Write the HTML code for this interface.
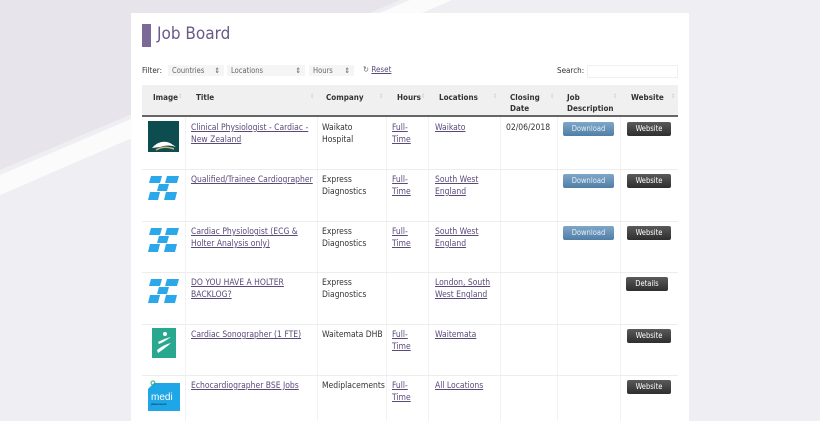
<!DOCTYPE html>
<html><head><meta charset="utf-8"><style>
*{margin:0;padding:0;box-sizing:border-box}
html,body{width:820px;height:421px;overflow:hidden}
body{position:relative;background:#efeef2;font-family:"Liberation Sans Narrow","DejaVu Sans Condensed","Liberation Sans",sans-serif;font-stretch:condensed;font-size:8.5px;color:#333}
.a{position:absolute}
.card{left:131px;top:13px;width:558px;height:408px;background:#fff}
a,.l{color:#5a4a7a;text-decoration:underline}
.t{position:absolute;line-height:12px;font-size:8.5px}
.h{position:absolute;font-weight:bold;font-size:8px;line-height:11px;color:#333}
.btn{position:absolute;height:14px;border-radius:2px;color:#fff;font-size:7.5px;text-align:center;line-height:14px}
.dl{background:linear-gradient(#7fa6c8,#4f7ea6);width:51px;left:563px;color:#e8f0f8}
.ws{background:linear-gradient(#5a5a5a,#2e2e2e);width:44px;left:627px}
.vl{position:absolute;top:117px;height:304px;width:1px;background:#f2f2f2}
.hl{position:absolute;left:142px;width:536px;height:1px;background:#ededed}
.sel{position:absolute;top:65px;height:11px;background:#f5f5f5;font-size:7.5px;color:#666;line-height:11px;padding-left:4px}
.arr{position:absolute;top:93px;font-size:6px;color:#ccc}
</style></head><body>
<svg class="a" style="left:0;top:0" width="820" height="421">
<polygon points="0,0 400,0 0,170" fill="#e7e5eb"/>
<polygon points="0,175 410,0 452,0 0,195" fill="#fbfbfc"/>
</svg>
<div class="a card"></div>
<div class="a" style="left:142px;top:24px;width:9px;height:23px;background:#7b6a98"></div>
<div class="a" style="left:157px;top:22px;font-family:'DejaVu Sans Condensed','Liberation Sans',sans-serif;font-size:17px;color:#6a5a88;line-height:24px">Job Board</div>
<div class="t" style="left:142px;top:65px;font-size:8px">Filter:</div>
<div class="sel" style="left:168px;width:56px">Countries<span style="position:absolute;right:4px">⇕</span></div>
<div class="sel" style="left:227px;width:78px">Locations<span style="position:absolute;right:4px">⇕</span></div>
<div class="sel" style="left:309px;width:45px">Hours<span style="position:absolute;right:4px">⇕</span></div>
<div class="t" style="left:363px;top:64px;font-size:8px"><span style="color:#666">↻</span> <span class="l">Reset</span></div>
<div class="t" style="left:557px;top:65px;font-size:8px">Search:</div>
<div class="a" style="left:587px;top:65px;width:91px;height:13px;border:1px solid #f0f0f0"></div>
<div class="a" style="left:142px;top:85px;width:536px;height:32px;background:#f0f0f0;border-bottom:2px solid #666"></div>
<div class="h" style="left:153px;top:92px">Image</div>
<div class="h" style="left:196px;top:92px">Title</div>
<div class="h" style="left:326px;top:92px">Company</div>
<div class="h" style="left:397px;top:92px">Hours</div>
<div class="h" style="left:439px;top:92px">Locations</div>
<div class="h" style="left:510px;top:92px">Closing<br>Date</div>
<div class="h" style="left:567px;top:92px">Job<br>Description</div>
<div class="h" style="left:631px;top:92px">Website</div>
<div class="arr" style="left:178px">⇕</div><div class="arr" style="left:310px">⇕</div><div class="arr" style="left:379px">⇕</div><div class="arr" style="left:421px">⇕</div><div class="arr" style="left:493px">⇕</div><div class="arr" style="left:550px">⇕</div><div class="arr" style="left:613px">⇕</div><div class="arr" style="left:671px">⇕</div>
<div class="vl" style="left:185px"></div><div class="vl" style="left:317px"></div><div class="vl" style="left:386px"></div><div class="vl" style="left:428px"></div><div class="vl" style="left:500px"></div><div class="vl" style="left:557px"></div><div class="vl" style="left:620px"></div>
<div class="hl" style="top:169px"></div><div class="hl" style="top:221px"></div><div class="hl" style="top:272px"></div><div class="hl" style="top:324px"></div><div class="hl" style="top:375px"></div>

<svg class="a" style="left:148px;top:121px" width="31" height="31"><rect width="31" height="31" fill="#0e4d4f"/><path d="M4 27 Q12 18 22 22 L28 26 Q20 23 12 26 Z" fill="#fff"/><path d="M8 29 Q16 24 26 28" stroke="#d6b07a" stroke-width="1.5" fill="none"/></svg>
<svg class="a" style="left:148px;top:176px" width="32" height="24"><g fill="#2aa8ea"><path d="M3 0h11l-2 7H1z"/><path d="M19 0h12l-2 7H17z"/><path d="M11 8h10l-2 7H9z"/><path d="M2 16h10l-2 8H0z"/><path d="M18 16h11l-2 8H16z"/></g></svg>
<svg class="a" style="left:148px;top:228px" width="32" height="24"><g fill="#2aa8ea"><path d="M3 0h11l-2 7H1z"/><path d="M19 0h12l-2 7H17z"/><path d="M11 8h10l-2 7H9z"/><path d="M2 16h10l-2 8H0z"/><path d="M18 16h11l-2 8H16z"/></g></svg>
<svg class="a" style="left:148px;top:279px" width="32" height="24"><g fill="#2aa8ea"><path d="M3 0h11l-2 7H1z"/><path d="M19 0h12l-2 7H17z"/><path d="M11 8h10l-2 7H9z"/><path d="M2 16h10l-2 8H0z"/><path d="M18 16h11l-2 8H16z"/></g></svg>
<svg class="a" style="left:152px;top:328px" width="24" height="30"><rect width="24" height="30" fill="#2aa88f"/><circle cx="13" cy="6" r="2" fill="#fff"/><path d="M6 14 Q14 10 19 9 Q12 14 7 16Z M5 22 Q13 16 19 15 Q12 21 6 25Z" fill="#fff"/></svg>
<svg class="a" style="left:148px;top:379px" width="32" height="32"><path d="M6 4 L32 4 L32 32 L0 32 L0 10Z" fill="#1ea6e6"/><circle cx="5" cy="4" r="2" fill="none" stroke="#2a7" stroke-width="1"/><text x="3" y="21" font-family="Liberation Sans" font-size="10" fill="#fff">medi</text><text x="3" y="26" font-family="Liberation Sans" font-size="3" fill="#113">placements</text></svg>

<div class="t l" style="left:191px;top:122px">Clinical Physiologist - Cardiac -<br>New Zealand</div>
<div class="t" style="left:322px;top:122px">Waikato<br>Hospital</div>
<div class="t l" style="left:392px;top:122px">Full-<br>Time</div>
<div class="t l" style="left:435px;top:122px">Waikato</div>
<div class="t" style="left:506px;top:122px">02/06/2018</div>
<div class="btn dl" style="top:122px">Download</div><div class="btn ws" style="top:122px">Website</div>
<div class="t l" style="left:191px;top:174px">Qualified/Trainee Cardiographer</div>
<div class="t" style="left:322px;top:174px">Express<br>Diagnostics</div>
<div class="t l" style="left:392px;top:174px">Full-<br>Time</div>
<div class="t l" style="left:435px;top:174px">South West<br>England</div>
<div class="btn dl" style="top:174px">Download</div><div class="btn ws" style="top:174px">Website</div>
<div class="t l" style="left:191px;top:226px">Cardiac Physiologist (ECG &amp;<br>Holter Analysis only)</div>
<div class="t" style="left:322px;top:226px">Express<br>Diagnostics</div>
<div class="t l" style="left:392px;top:226px">Full-<br>Time</div>
<div class="t l" style="left:435px;top:226px">South West<br>England</div>
<div class="btn dl" style="top:226px">Download</div><div class="btn ws" style="top:226px">Website</div>
<div class="t l" style="left:191px;top:277px">DO YOU HAVE A HOLTER<br>BACKLOG?</div>
<div class="t" style="left:322px;top:277px">Express<br>Diagnostics</div>
<div class="t l" style="left:435px;top:277px">London, South<br>West England</div>
<div class="btn ws" style="top:277px;left:626px;width:42px">Details</div>
<div class="t l" style="left:191px;top:329px">Cardiac Sonographer (1 FTE)</div>
<div class="t" style="left:322px;top:329px">Waitemata DHB</div>
<div class="t l" style="left:392px;top:329px">Full-<br>Time</div>
<div class="t l" style="left:435px;top:329px">Waitemata</div>
<div class="btn ws" style="top:329px">Website</div>
<div class="t l" style="left:191px;top:380px">Echocardiographer BSE Jobs</div>
<div class="t" style="left:322px;top:380px">Mediplacements</div>
<div class="t l" style="left:392px;top:380px">Full-<br>Time</div>
<div class="t l" style="left:435px;top:380px">All Locations</div>
<div class="btn ws" style="top:380px">Website</div>
</body></html>
